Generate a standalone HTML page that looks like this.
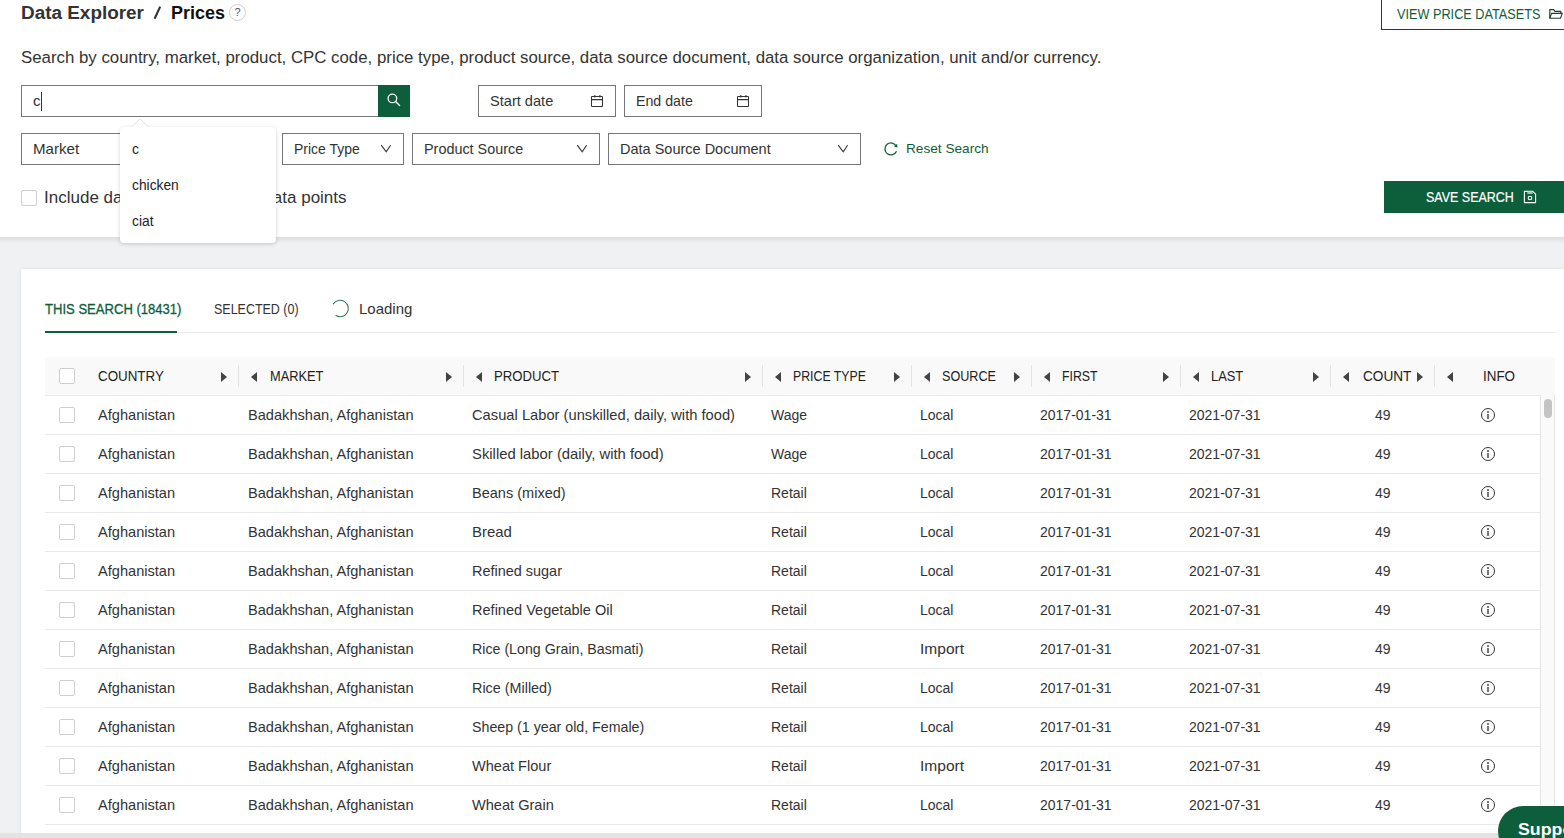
<!DOCTYPE html>
<html><head><meta charset="utf-8">
<style>
*{box-sizing:border-box;margin:0;padding:0}
html,body{width:1564px;height:838px;overflow:hidden;background:#f0f1f2;font-family:"Liberation Sans",sans-serif;color:#333}
.a{position:absolute;white-space:nowrap}
#top{position:absolute;left:0;top:0;width:1564px;height:237px;background:#fff}
#shadow{position:absolute;left:0;top:237px;width:1564px;height:6px;background:linear-gradient(#dcdddd,#f0f1f2)}
.box{position:absolute;border:1px solid #767877;background:#fff}
.txt{position:absolute;font-size:14px;line-height:16px;color:#333;white-space:nowrap}
.green{color:#0d5e3b}
#card{position:absolute;left:21px;top:269px;width:1543px;height:569px;background:#fff;box-shadow:0 0 3px rgba(0,0,0,.10)}
.hline{position:absolute;height:1px;background:#e9e9e9}
.cb{position:absolute;width:16px;height:16px;border:1px solid #cfcfcf;border-radius:2px;background:#fff}
.hd{font-size:13.8px;color:#222;transform:scaleX(0.94);transform-origin:0 0}
.rw{font-size:14.6px;color:#333}
.rs{font-size:14px;color:#333}
.tri{position:absolute;width:0;height:0;border-top:5px solid transparent;border-bottom:5px solid transparent}
.tri.r{border-left:6px solid #444}
.tri.l{border-right:6px solid #444}
.info{position:absolute;width:14px;height:14px;border:1.1px solid #333;border-radius:50%}
.info i{position:absolute;left:5.4px;top:5px;width:1.2px;height:5px;background:#777}
.info i:before{content:"";position:absolute;left:0;top:-2.6px;width:1.2px;height:1.4px;background:#777}
</style></head><body>
<div id="top"></div>
<div id="shadow"></div>

<!-- title -->
<div class="a" style="left:21px;top:1px;font-size:18.7px;line-height:24px;font-weight:700;color:#333;transform:scaleX(1.012);transform-origin:0 0">Data Explorer</div>
<svg class="a" style="left:150px;top:4px" width="14" height="18" viewBox="0 0 14 18"><path d="M4.6 14.8 L10.2 2.6" stroke="#333" stroke-width="2.1"/></svg>
<div class="a" style="left:171px;top:1px;font-size:18.7px;line-height:24px;font-weight:700;color:#111;transform:scaleX(0.96);transform-origin:0 0">Prices</div>
<div class="a" style="left:229px;top:4px;width:17px;height:17px;border:1px solid #cfcfcf;border-radius:50%;font-size:11px;line-height:15px;text-align:center;color:#555">?</div>

<!-- view price datasets -->
<div class="box" style="left:1381px;top:-10px;width:200px;height:40px;border-color:#333"></div>
<div class="txt green" style="left:1397px;top:6px;font-size:14.2px;transform:scaleX(0.895);transform-origin:0 0">VIEW PRICE DATASETS</div>

<!-- description -->
<div class="txt" style="left:21px;top:48px;font-size:16.8px;line-height:20px;transform:scaleX(1.0025);transform-origin:0 0">Search by country, market, product, CPC code, price type, product source, data source document, data source organization, unit and/or currency.</div>

<!-- search -->
<div class="box" style="left:21px;top:85px;width:358px;height:32px"></div>
<div class="txt" style="left:33px;top:93px;font-size:15px">c</div>
<div class="a" style="left:41px;top:92px;width:1px;height:19px;background:#333"></div>
<div class="a" style="left:378px;top:85px;width:32px;height:32px;background:#0d5e3b"></div>

<div class="box" style="left:478px;top:85px;width:138px;height:32px"></div>
<div class="txt" style="left:490px;top:93px;font-size:14.6px">Start date</div>
<div class="box" style="left:624px;top:85px;width:138px;height:32px"></div>
<div class="txt" style="left:636px;top:93px;font-size:14.2px">End date</div>

<!-- row 2 -->
<div class="box" style="left:21px;top:133px;width:254px;height:32px"></div>
<div class="txt" style="left:33px;top:141px;font-size:14.4px;transform:scaleX(1.05);transform-origin:0 0">Market</div>
<div class="box" style="left:282px;top:133px;width:122px;height:32px"></div>
<div class="txt" style="left:294px;top:141px;font-size:14px">Price Type</div>
<div class="box" style="left:412px;top:133px;width:188px;height:32px"></div>
<div class="txt" style="left:424px;top:141px;font-size:14.4px">Product Source</div>
<div class="box" style="left:608px;top:133px;width:253px;height:32px"></div>
<div class="txt" style="left:620px;top:141px;font-size:14.5px">Data Source Document</div>
<div class="txt green" style="left:906px;top:141px;font-size:13.65px">Reset Search</div>

<!-- include checkbox -->
<div class="cb" style="left:21px;top:190px"></div>
<div class="txt" style="left:44px;top:188px;font-size:16.8px;line-height:20px;transform:scaleX(1.0135);transform-origin:0 0">Include data with less than 3 data points</div>

<!-- save search -->
<div class="a" style="left:1384px;top:181px;width:180px;height:32px;background:#0d5e3b"></div>
<div class="txt" style="left:1426px;top:189px;font-size:14.6px;color:#fff;transform:scaleX(0.855);transform-origin:0 0;-webkit-text-stroke:0.2px #fff">SAVE SEARCH</div>

<!-- card -->
<div id="card"></div>

<!-- tabs -->
<div class="txt green" style="left:45px;top:301px;font-size:14.6px;transform:scaleX(0.895);transform-origin:0 0;-webkit-text-stroke:0.3px #0d5e3b">THIS SEARCH (18431)</div>
<div class="a" style="left:45px;top:331px;width:132px;height:2px;background:#0d5e3b"></div>
<div class="hline" style="left:177px;top:332px;width:1378px"></div>
<div class="txt" style="left:214px;top:301px;font-size:14.6px;transform:scaleX(0.855);transform-origin:0 0">SELECTED (0)</div>
<div class="txt" style="left:359px;top:301px;font-size:15px">Loading</div>
<!-- TABLE -->
<div class="a" style="left:45px;top:357px;width:1510px;height:38px;background:#f9f9f9"></div>
<div class="hline" style="left:45px;top:395px;width:1510px;background:#eaeaea"></div>
<div class="cb" style="left:59px;top:368px"></div>
<div class="a" style="left:238px;top:365px;width:1px;height:22px;background:#e2e2e2"></div>
<div class="a" style="left:463px;top:365px;width:1px;height:22px;background:#e2e2e2"></div>
<div class="a" style="left:762px;top:365px;width:1px;height:22px;background:#e2e2e2"></div>
<div class="a" style="left:911px;top:365px;width:1px;height:22px;background:#e2e2e2"></div>
<div class="a" style="left:1031px;top:365px;width:1px;height:22px;background:#e2e2e2"></div>
<div class="a" style="left:1180px;top:365px;width:1px;height:22px;background:#e2e2e2"></div>
<div class="a" style="left:1330px;top:365px;width:1px;height:22px;background:#e2e2e2"></div>
<div class="a" style="left:1434px;top:365px;width:1px;height:22px;background:#e2e2e2"></div>
<div class="txt hd" style="left:98px;top:369px;transform:scaleX(0.969)">COUNTRY</div>
<div class="txt hd" style="left:270px;top:369px;transform:scaleX(0.928)">MARKET</div>
<div class="txt hd" style="left:494px;top:369px;transform:scaleX(0.953)">PRODUCT</div>
<div class="txt hd" style="left:793px;top:369px;transform:scaleX(0.892)">PRICE TYPE</div>
<div class="txt hd" style="left:942px;top:369px;transform:scaleX(0.914)">SOURCE</div>
<div class="txt hd" style="left:1062px;top:369px;transform:scaleX(0.893)">FIRST</div>
<div class="txt hd" style="left:1211px;top:369px;transform:scaleX(0.934)">LAST</div>
<div class="txt hd" style="left:1363px;top:369px;transform:scaleX(0.986)">COUNT</div>
<div class="txt hd" style="left:1483px;top:369px;transform:scaleX(0.971)">INFO</div>
<div class="tri r" style="left:221px;top:372px"></div>
<div class="tri l" style="left:251px;top:372px"></div>
<div class="tri r" style="left:446px;top:372px"></div>
<div class="tri l" style="left:476px;top:372px"></div>
<div class="tri r" style="left:745px;top:372px"></div>
<div class="tri l" style="left:775px;top:372px"></div>
<div class="tri r" style="left:894px;top:372px"></div>
<div class="tri l" style="left:924px;top:372px"></div>
<div class="tri r" style="left:1014px;top:372px"></div>
<div class="tri l" style="left:1044px;top:372px"></div>
<div class="tri r" style="left:1163px;top:372px"></div>
<div class="tri l" style="left:1193px;top:372px"></div>
<div class="tri r" style="left:1313px;top:372px"></div>
<div class="tri l" style="left:1343px;top:372px"></div>
<div class="tri r" style="left:1417px;top:372px"></div>
<div class="tri l" style="left:1447px;top:372px"></div>
<div class="cb" style="left:59px;top:407px"></div>
<div class="txt rw" style="left:98px;top:407px">Afghanistan</div>
<div class="txt rw" style="left:248px;top:407px">Badakhshan, Afghanistan</div>
<div class="txt rw" style="left:472px;top:407px;transform:scaleX(1.008);transform-origin:0 0">Casual Labor (unskilled, daily, with food)</div>
<div class="txt rs" style="left:771px;top:407px">Wage</div>
<div class="txt rs" style="left:920px;top:407px">Local</div>
<div class="txt rs" style="left:1040px;top:407px">2017-01-31</div>
<div class="txt rs" style="left:1189px;top:407px">2021-07-31</div>
<div class="txt rs" style="left:1375px;top:407px">49</div>
<div class="info" style="left:1481px;top:408px"><i></i></div>
<div class="hline" style="left:45px;top:434px;width:1495px"></div>
<div class="cb" style="left:59px;top:446px"></div>
<div class="txt rw" style="left:98px;top:446px">Afghanistan</div>
<div class="txt rw" style="left:248px;top:446px">Badakhshan, Afghanistan</div>
<div class="txt rw" style="left:472px;top:446px;transform:scaleX(1.016);transform-origin:0 0">Skilled labor (daily, with food)</div>
<div class="txt rs" style="left:771px;top:446px">Wage</div>
<div class="txt rs" style="left:920px;top:446px">Local</div>
<div class="txt rs" style="left:1040px;top:446px">2017-01-31</div>
<div class="txt rs" style="left:1189px;top:446px">2021-07-31</div>
<div class="txt rs" style="left:1375px;top:446px">49</div>
<div class="info" style="left:1481px;top:447px"><i></i></div>
<div class="hline" style="left:45px;top:473px;width:1495px"></div>
<div class="cb" style="left:59px;top:485px"></div>
<div class="txt rw" style="left:98px;top:485px">Afghanistan</div>
<div class="txt rw" style="left:248px;top:485px">Badakhshan, Afghanistan</div>
<div class="txt rw" style="left:472px;top:485px;transform:scaleX(0.996);transform-origin:0 0">Beans (mixed)</div>
<div class="txt rs" style="left:771px;top:485px">Retail</div>
<div class="txt rs" style="left:920px;top:485px">Local</div>
<div class="txt rs" style="left:1040px;top:485px">2017-01-31</div>
<div class="txt rs" style="left:1189px;top:485px">2021-07-31</div>
<div class="txt rs" style="left:1375px;top:485px">49</div>
<div class="info" style="left:1481px;top:486px"><i></i></div>
<div class="hline" style="left:45px;top:512px;width:1495px"></div>
<div class="cb" style="left:59px;top:524px"></div>
<div class="txt rw" style="left:98px;top:524px">Afghanistan</div>
<div class="txt rw" style="left:248px;top:524px">Badakhshan, Afghanistan</div>
<div class="txt rw" style="left:472px;top:524px;transform:scaleX(1.024);transform-origin:0 0">Bread</div>
<div class="txt rs" style="left:771px;top:524px">Retail</div>
<div class="txt rs" style="left:920px;top:524px">Local</div>
<div class="txt rs" style="left:1040px;top:524px">2017-01-31</div>
<div class="txt rs" style="left:1189px;top:524px">2021-07-31</div>
<div class="txt rs" style="left:1375px;top:524px">49</div>
<div class="info" style="left:1481px;top:525px"><i></i></div>
<div class="hline" style="left:45px;top:551px;width:1495px"></div>
<div class="cb" style="left:59px;top:563px"></div>
<div class="txt rw" style="left:98px;top:563px">Afghanistan</div>
<div class="txt rw" style="left:248px;top:563px">Badakhshan, Afghanistan</div>
<div class="txt rw" style="left:472px;top:563px;transform:scaleX(0.99);transform-origin:0 0">Refined sugar</div>
<div class="txt rs" style="left:771px;top:563px">Retail</div>
<div class="txt rs" style="left:920px;top:563px">Local</div>
<div class="txt rs" style="left:1040px;top:563px">2017-01-31</div>
<div class="txt rs" style="left:1189px;top:563px">2021-07-31</div>
<div class="txt rs" style="left:1375px;top:563px">49</div>
<div class="info" style="left:1481px;top:564px"><i></i></div>
<div class="hline" style="left:45px;top:590px;width:1495px"></div>
<div class="cb" style="left:59px;top:602px"></div>
<div class="txt rw" style="left:98px;top:602px">Afghanistan</div>
<div class="txt rw" style="left:248px;top:602px">Badakhshan, Afghanistan</div>
<div class="txt rw" style="left:472px;top:602px;transform:scaleX(0.997);transform-origin:0 0">Refined Vegetable Oil</div>
<div class="txt rs" style="left:771px;top:602px">Retail</div>
<div class="txt rs" style="left:920px;top:602px">Local</div>
<div class="txt rs" style="left:1040px;top:602px">2017-01-31</div>
<div class="txt rs" style="left:1189px;top:602px">2021-07-31</div>
<div class="txt rs" style="left:1375px;top:602px">49</div>
<div class="info" style="left:1481px;top:603px"><i></i></div>
<div class="hline" style="left:45px;top:629px;width:1495px"></div>
<div class="cb" style="left:59px;top:641px"></div>
<div class="txt rw" style="left:98px;top:641px">Afghanistan</div>
<div class="txt rw" style="left:248px;top:641px">Badakhshan, Afghanistan</div>
<div class="txt rw" style="left:472px;top:641px;transform:scaleX(0.974);transform-origin:0 0">Rice (Long Grain, Basmati)</div>
<div class="txt rs" style="left:771px;top:641px">Retail</div>
<div class="txt rs" style="left:920px;top:641px;transform:scaleX(1.11);transform-origin:0 0">Import</div>
<div class="txt rs" style="left:1040px;top:641px">2017-01-31</div>
<div class="txt rs" style="left:1189px;top:641px">2021-07-31</div>
<div class="txt rs" style="left:1375px;top:641px">49</div>
<div class="info" style="left:1481px;top:642px"><i></i></div>
<div class="hline" style="left:45px;top:668px;width:1495px"></div>
<div class="cb" style="left:59px;top:680px"></div>
<div class="txt rw" style="left:98px;top:680px">Afghanistan</div>
<div class="txt rw" style="left:248px;top:680px">Badakhshan, Afghanistan</div>
<div class="txt rw" style="left:472px;top:680px;transform:scaleX(0.985);transform-origin:0 0">Rice (Milled)</div>
<div class="txt rs" style="left:771px;top:680px">Retail</div>
<div class="txt rs" style="left:920px;top:680px">Local</div>
<div class="txt rs" style="left:1040px;top:680px">2017-01-31</div>
<div class="txt rs" style="left:1189px;top:680px">2021-07-31</div>
<div class="txt rs" style="left:1375px;top:680px">49</div>
<div class="info" style="left:1481px;top:681px"><i></i></div>
<div class="hline" style="left:45px;top:707px;width:1495px"></div>
<div class="cb" style="left:59px;top:719px"></div>
<div class="txt rw" style="left:98px;top:719px">Afghanistan</div>
<div class="txt rw" style="left:248px;top:719px">Badakhshan, Afghanistan</div>
<div class="txt rw" style="left:472px;top:719px;transform:scaleX(0.974);transform-origin:0 0">Sheep (1 year old, Female)</div>
<div class="txt rs" style="left:771px;top:719px">Retail</div>
<div class="txt rs" style="left:920px;top:719px">Local</div>
<div class="txt rs" style="left:1040px;top:719px">2017-01-31</div>
<div class="txt rs" style="left:1189px;top:719px">2021-07-31</div>
<div class="txt rs" style="left:1375px;top:719px">49</div>
<div class="info" style="left:1481px;top:720px"><i></i></div>
<div class="hline" style="left:45px;top:746px;width:1495px"></div>
<div class="cb" style="left:59px;top:758px"></div>
<div class="txt rw" style="left:98px;top:758px">Afghanistan</div>
<div class="txt rw" style="left:248px;top:758px">Badakhshan, Afghanistan</div>
<div class="txt rw" style="left:472px;top:758px;transform:scaleX(0.997);transform-origin:0 0">Wheat Flour</div>
<div class="txt rs" style="left:771px;top:758px">Retail</div>
<div class="txt rs" style="left:920px;top:758px;transform:scaleX(1.11);transform-origin:0 0">Import</div>
<div class="txt rs" style="left:1040px;top:758px">2017-01-31</div>
<div class="txt rs" style="left:1189px;top:758px">2021-07-31</div>
<div class="txt rs" style="left:1375px;top:758px">49</div>
<div class="info" style="left:1481px;top:759px"><i></i></div>
<div class="hline" style="left:45px;top:785px;width:1495px"></div>
<div class="cb" style="left:59px;top:797px"></div>
<div class="txt rw" style="left:98px;top:797px">Afghanistan</div>
<div class="txt rw" style="left:248px;top:797px">Badakhshan, Afghanistan</div>
<div class="txt rw" style="left:472px;top:797px;transform:scaleX(0.998);transform-origin:0 0">Wheat Grain</div>
<div class="txt rs" style="left:771px;top:797px">Retail</div>
<div class="txt rs" style="left:920px;top:797px">Local</div>
<div class="txt rs" style="left:1040px;top:797px">2017-01-31</div>
<div class="txt rs" style="left:1189px;top:797px">2021-07-31</div>
<div class="txt rs" style="left:1375px;top:797px">49</div>
<div class="info" style="left:1481px;top:798px"><i></i></div>
<div class="hline" style="left:45px;top:824px;width:1495px"></div>
<!-- /TABLE -->
<!-- icons -->
<svg class="a" style="left:378px;top:85px" width="32" height="32" viewBox="0 0 32 32"><circle cx="14.4" cy="13.4" r="4.3" fill="none" stroke="#fff" stroke-width="1.3"/><path d="M17.5 16.5 L21.6 20.6" stroke="#fff" stroke-width="1.4" stroke-linecap="round"/></svg>
<svg class="a cal" style="left:589px;top:93px" width="16" height="16" viewBox="0 0 16 16"><rect x="2.5" y="3.5" width="11" height="10" rx="0.6" fill="none" stroke="#333" stroke-width="1.05"/><path d="M2.5 6.6 H13.5 M5.8 2 V4.6 M10.9 2 V4.6" stroke="#333" stroke-width="1.05"/></svg>
<svg class="a cal" style="left:735px;top:93px" width="16" height="16" viewBox="0 0 16 16"><rect x="2.5" y="3.5" width="11" height="10" rx="0.6" fill="none" stroke="#333" stroke-width="1.05"/><path d="M2.5 6.6 H13.5 M5.8 2 V4.6 M10.9 2 V4.6" stroke="#333" stroke-width="1.05"/></svg>
<svg class="a" style="left:378px;top:142px" width="16" height="12" viewBox="0 0 16 12"><path d="M3.2 3.2 L8.2 9.9 L12.6 3.2" fill="none" stroke="#333" stroke-width="1.1"/></svg>
<svg class="a" style="left:574px;top:142px" width="16" height="12" viewBox="0 0 16 12"><path d="M3.2 3.2 L8.2 9.9 L12.6 3.2" fill="none" stroke="#333" stroke-width="1.1"/></svg>
<svg class="a" style="left:835px;top:142px" width="16" height="12" viewBox="0 0 16 12"><path d="M3.2 3.2 L8.2 9.9 L12.6 3.2" fill="none" stroke="#333" stroke-width="1.1"/></svg>
<svg class="a" style="left:882px;top:140px" width="18" height="18" viewBox="0 0 18 18"><path d="M14.3 6.2 A6 6 0 1 0 14.5 11.2" fill="none" stroke="#0d5e3b" stroke-width="1.3"/><path d="M15.2 3.8 L15.4 7.4 L12 6.6 Z" fill="#0d5e3b"/></svg>
<svg class="a" style="left:1546px;top:6px" width="18" height="16" viewBox="0 0 18 16"><path d="M3.8 12.2 V3.6 H7.7 L9 5.4 H14.8 V7.4" fill="none" stroke="#1f3d2e" stroke-width="1.15" stroke-linejoin="round"/><path d="M3.8 12.2 L5.5 7.4 H16.3 L14.5 12.2 Z" fill="none" stroke="#1f3d2e" stroke-width="1.15" stroke-linejoin="round"/></svg>
<svg class="a" style="left:1522px;top:189px" width="16" height="16" viewBox="0 0 16 16"><path d="M2.4 2.4 H10.8 L13.6 5.2 V13.6 H2.4 Z" fill="none" stroke="#fff" stroke-width="1.1" stroke-linejoin="round"/><rect x="5.3" y="2.4" width="5.3" height="2.6" fill="#9fc3b0"/><circle cx="8" cy="9" r="1.8" fill="none" stroke="#fff" stroke-width="1.1"/></svg>
<svg class="a" style="left:330px;top:298px" width="21" height="21" viewBox="0 0 21 21"><path d="M3.3 5.9 A8.2 8.2 0 1 1 6.0 17.6" fill="none" stroke="#2f7a58" stroke-width="1.1" stroke-linecap="round"/></svg>
<!-- scrollbar -->
<div class="a" style="left:1540px;top:395px;width:15px;height:438px;background:#fafafa;border-left:1px solid #e4e4e4;border-right:1px solid #e4e4e4"></div>
<div class="a" style="left:1544px;top:399px;width:8px;height:19px;background:#c4c4c4;border-radius:4px"></div>
<!-- bottom band -->
<div class="a" style="left:0;top:833px;width:1564px;height:5px;background:#e3e3e3"></div>
<!-- support -->
<div class="a" style="left:1498px;top:806px;width:120px;height:50px;background:#0d5e3b;border-radius:25px"></div>
<div class="a" style="left:1518px;top:820px;font-size:16.8px;line-height:20px;font-weight:700;color:#fff;transform:scaleX(1.06);transform-origin:0 0">Support</div>
<!-- popup -->
<div class="a" style="left:120px;top:127px;width:156px;height:116px;background:#fff;border-radius:4px;box-shadow:0 1px 4px rgba(0,0,0,.18)"></div>
<svg class="a" style="left:128px;top:117px" width="24" height="11" viewBox="0 0 24 11"><path d="M3.4 10 L12 2.2 L20.8 10" fill="#fff" stroke="#e2e2e2" stroke-width="1"/><rect x="0" y="10" width="24" height="1" fill="#fff"/></svg>
<div class="txt" style="left:132px;top:142px;font-size:13.8px;color:#222">c</div>
<div class="txt" style="left:132px;top:178px;font-size:13.8px;color:#222">chicken</div>
<div class="txt" style="left:132px;top:214px;font-size:13.8px;color:#222">ciat</div>

</body></html>
